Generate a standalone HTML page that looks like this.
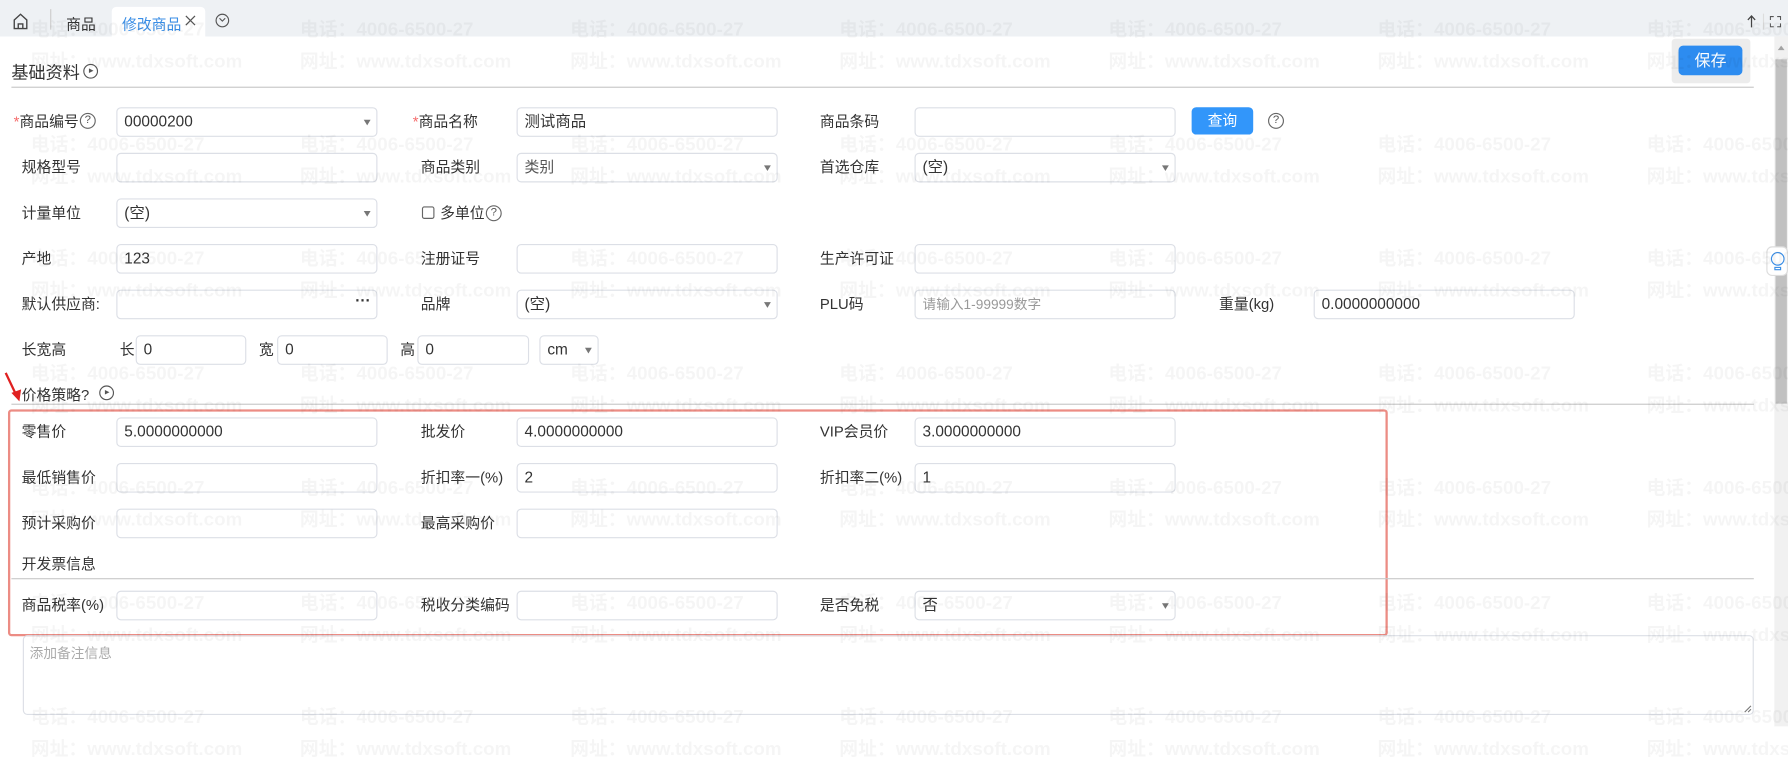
<!DOCTYPE html>
<html><head><meta charset="utf-8"><style>
*{box-sizing:border-box;margin:0;padding:0}
html,body{width:1788px;height:726px;overflow:hidden;background:#fff}
#s{position:absolute;left:0;top:0;width:1568px;height:637px;transform:scale(1.14031);transform-origin:0 0;font-family:"Liberation Sans","Noto Sans CJK SC",sans-serif;font-size:13px;color:#333}
.a{position:absolute;white-space:nowrap}
.lb{position:absolute;line-height:16px;white-space:nowrap;color:#333}
.in{position:absolute;height:26px;border:1px solid #dcdfe6;border-radius:4px;background:transparent;padding-left:6px;line-height:24px;font-size:13.5px;color:#333;white-space:nowrap}
.car::after{content:"";position:absolute;right:5px;top:10px;border-left:3.5px solid transparent;border-right:3.5px solid transparent;border-top:5px solid #777}
.q{position:absolute;width:14px;height:14px;border:1.2px solid #666;border-radius:50%;font-size:10px;line-height:12px;text-align:center;color:#555}
.st{color:#f56c6c}
.wm{position:absolute;font-weight:bold;font-size:16.5px;color:rgba(0,0,0,0.038);white-space:nowrap;font-family:"Liberation Sans","Noto Sans CJK SC",sans-serif;pointer-events:none}
.hr{position:absolute;height:1px;background:#c8c8c8}
.pl{position:absolute;width:13px;height:13px;border:1.2px solid #555;border-radius:50%}
.pl::after{content:"";position:absolute;left:4px;top:3px;border-top:2.5px solid transparent;border-bottom:2.5px solid transparent;border-left:4px solid #555}
</style></head><body><div id="s">
<div class="a" style="left:0;top:0;width:1568px;height:32px;background:#eef1f4"></div>
<svg class="a" style="left:11px;top:11px" width="14" height="15" viewBox="0 0 14 15"><path d="M1.5 6.5L7 1.5l5.5 5V14h-11z M5 14v-4h4v4" fill="none" stroke="#444" stroke-width="1.2"/></svg>
<div class="a" style="left:44px;top:8px;width:1px;height:18px;background:#ccc"></div>
<div class="a" style="left:58px;top:11px;color:#333">商品</div>
<div class="a" style="left:98px;top:6px;width:82px;height:26px;background:#fff;border-radius:4px 4px 0 0"></div>
<div class="a" style="left:107px;top:11px;color:#3a8ee6">修改商品</div>
<svg class="a" style="left:162px;top:13px" width="10" height="10"><path d="M1 1L9 9M9 1L1 9" stroke="#555" stroke-width="1.1"/></svg>
<div class="a" style="left:189px;top:12px;width:12px;height:12px;border:1.2px solid #555;border-radius:50%"></div>
<svg class="a" style="left:192px;top:15px" width="6" height="5"><path d="M0.5 1l2.5 2.5L5.5 1" stroke="#555" fill="none"/></svg>
<svg class="a" style="left:1532px;top:13px" width="8" height="12"><path d="M4 11V1M0.8 4.5L4 1l3.2 3.5" stroke="#444" fill="none" stroke-width="1.1"/></svg>
<div class="a" style="left:1546px;top:12px;width:1px;height:14px;background:#ddd"></div>
<svg class="a" style="left:1552px;top:14px" width="10" height="10"><path d="M0.5 3.5V0.5h3M6.5 0.5h3v3M9.5 6.5v3h-3M3.5 9.5h-3v-3" stroke="#555" fill="none"/></svg>

<div class="a" style="left:1466px;top:34px;width:69px;height:39px;background:#ececec;border-radius:3px"></div>
<div class="a" style="left:1472px;top:40px;width:56px;height:26px;background:#2d8cf0;border-radius:4px;color:#fff;text-align:center;line-height:26px;font-size:14px">保存</div>

<div class="a" style="left:1556px;top:32px;width:12px;height:605px;background:#f1f1f1"></div>
<div class="a" style="left:1557px;top:52px;width:10px;height:302px;background:#c1c1c1"></div>
<div class="a" style="left:1559px;top:40px;border-left:3px solid transparent;border-right:3px solid transparent;border-bottom:4px solid #a3a3a3"></div>
<div class="a" style="left:1549px;top:216px;width:19px;height:26px;background:#fff;border:1px solid #ddd;border-radius:5px"></div>
<div class="a" style="left:1553px;top:221px;width:12px;height:12px;border:1.5px solid #3a8ee6;border-radius:50%"></div>
<div class="a" style="left:1556px;top:234px;width:6px;height:3px;border:1.2px solid #3a8ee6"></div>

<div class="a" style="left:10px;top:53px;font-size:15px">基础资料</div>
<div class="pl" style="left:73px;top:56px"></div>
<div class="hr" style="left:10px;top:76px;width:1528px"></div>

<div class="lb" style="left:12px;top:99px"><span class="st">*</span>商品编号</div><div class="q" style="left:70px;top:99px">?</div>
<div class="in car" style="left:102px;top:94px;width:229px">00000200</div>
<div class="lb" style="left:362px;top:99px"><span class="st">*</span>商品名称</div>
<div class="in" style="left:453px;top:94px;width:229px">测试商品</div>
<div class="lb" style="left:719px;top:99px">商品条码</div>
<div class="in" style="left:802px;top:94px;width:229px"></div>
<div class="a" style="left:1045px;top:94px;width:54px;height:24px;background:#3296fa;border-radius:4px;color:#fff;text-align:center;line-height:24px">查询</div>
<div class="q" style="left:1112px;top:99px">?</div>
<div class="lb" style="left:19px;top:139px">规格型号</div>
<div class="in" style="left:102px;top:134px;width:229px"></div>
<div class="lb" style="left:369px;top:139px">商品类别</div>
<div class="in car" style="left:453px;top:134px;width:229px;font-size:13px;color:#555">类别</div>
<div class="lb" style="left:719px;top:139px">首选仓库</div>
<div class="in car" style="left:802px;top:134px;width:229px">(空)</div>
<div class="lb" style="left:19px;top:179px">计量单位</div>
<div class="in car" style="left:102px;top:174px;width:229px">(空)</div>
<div class="a" style="left:370px;top:181px;width:11px;height:11px;border:1px solid #666;border-radius:2px"></div>
<div class="lb" style="left:386px;top:179px">多单位</div><div class="q" style="left:426px;top:180px">?</div>
<div class="lb" style="left:19px;top:219px">产地</div>
<div class="in" style="left:102px;top:214px;width:229px">123</div>
<div class="lb" style="left:369px;top:219px">注册证号</div>
<div class="in" style="left:453px;top:214px;width:229px"></div>
<div class="lb" style="left:719px;top:219px">生产许可证</div>
<div class="in" style="left:802px;top:214px;width:229px"></div>
<div class="lb" style="left:19px;top:259px">默认供应商:</div>
<div class="in" style="left:102px;top:254px;width:229px"><span style="position:absolute;right:5px;top:-3px;font-weight:bold">···</span></div>
<div class="lb" style="left:369px;top:259px">品牌</div>
<div class="in car" style="left:453px;top:254px;width:229px">(空)</div>
<div class="lb" style="left:719px;top:259px">PLU码</div>
<div class="in" style="left:802px;top:254px;width:229px;font-size:12px;color:#999">请输入1-99999数字</div>
<div class="lb" style="left:1069px;top:259px">重量(kg)</div>
<div class="in" style="left:1152px;top:254px;width:229px">0.0000000000</div>
<div class="lb" style="left:19px;top:299px">长宽高</div>
<div class="lb" style="left:105px;top:299px">长</div><div class="in" style="left:119px;top:294px;width:97px">0</div>
<div class="lb" style="left:227px;top:299px">宽</div><div class="in" style="left:243px;top:294px;width:97px">0</div>
<div class="lb" style="left:351px;top:299px">高</div><div class="in" style="left:366px;top:294px;width:98px">0</div>
<div class="in car" style="left:473px;top:294px;width:52px">cm</div>

<svg class="a" style="left:2px;top:325px" width="18" height="28"><path d="M3 2L12 21" stroke="#e02020" stroke-width="2"/><path d="M15 27L8 19.5L16.5 16.5z" fill="#e02020"/></svg>
<div class="a" style="left:19px;top:336px;font-size:13px">价格策略?</div>
<div class="pl" style="left:87px;top:338px"></div>
<div class="hr" style="left:10px;top:354px;width:1528px"></div>
<div class="a" style="left:7px;top:359px;width:1210px;height:199px;border:2px solid #ec8c84;border-radius:3px"></div>

<div class="lb" style="left:19px;top:371px">零售价</div><div class="in" style="left:102px;top:366px;width:229px">5.0000000000</div>
<div class="lb" style="left:369px;top:371px">批发价</div><div class="in" style="left:453px;top:366px;width:229px">4.0000000000</div>
<div class="lb" style="left:719px;top:371px">VIP会员价</div><div class="in" style="left:802px;top:366px;width:229px">3.0000000000</div>
<div class="lb" style="left:19px;top:411px">最低销售价</div><div class="in" style="left:102px;top:406px;width:229px"></div>
<div class="lb" style="left:369px;top:411px">折扣率一(%)</div><div class="in" style="left:453px;top:406px;width:229px">2</div>
<div class="lb" style="left:719px;top:411px">折扣率二(%)</div><div class="in" style="left:802px;top:406px;width:229px">1</div>
<div class="lb" style="left:19px;top:451px">预计采购价</div><div class="in" style="left:102px;top:446px;width:229px"></div>
<div class="lb" style="left:369px;top:451px">最高采购价</div><div class="in" style="left:453px;top:446px;width:229px"></div>
<div class="lb" style="left:19px;top:487px">开发票信息</div>
<div class="hr" style="left:10px;top:507px;width:1528px"></div>
<div class="lb" style="left:19px;top:523px">商品税率(%)</div><div class="in" style="left:102px;top:518px;width:229px"></div>
<div class="lb" style="left:369px;top:523px">税收分类编码</div><div class="in" style="left:453px;top:518px;width:229px"></div>
<div class="lb" style="left:719px;top:523px">是否免税</div><div class="in car" style="left:802px;top:518px;width:229px">否</div>

<div class="a" style="left:20px;top:557px;width:1518px;height:70px;border:1px solid #dcdfe6;border-radius:4px;padding:6px 5px;font-size:12px;color:#aaa">添加备注信息</div>
<svg class="a" style="left:1529px;top:618px" width="7" height="7"><path d="M1 6.5L6.5 1M4 6.5L6.5 4" stroke="#777"/></svg>

<div id="wmx"></div>
<script>
var h='';var xs=[27,263,500,736,972,1208,1444];
for(var r=0;r<7;r++){var y=12+r*100.5;for(var i=0;i<7;i++){h+='<div class="wm" style="left:'+xs[i]+'px;top:'+y+'px">电话：4006-6500-27</div><div class="wm" style="left:'+xs[i]+'px;top:'+(y+28)+'px">网址：www.tdxsoft.com</div>';}}
document.getElementById('wmx').outerHTML=h;
</script>
</div></body></html>
